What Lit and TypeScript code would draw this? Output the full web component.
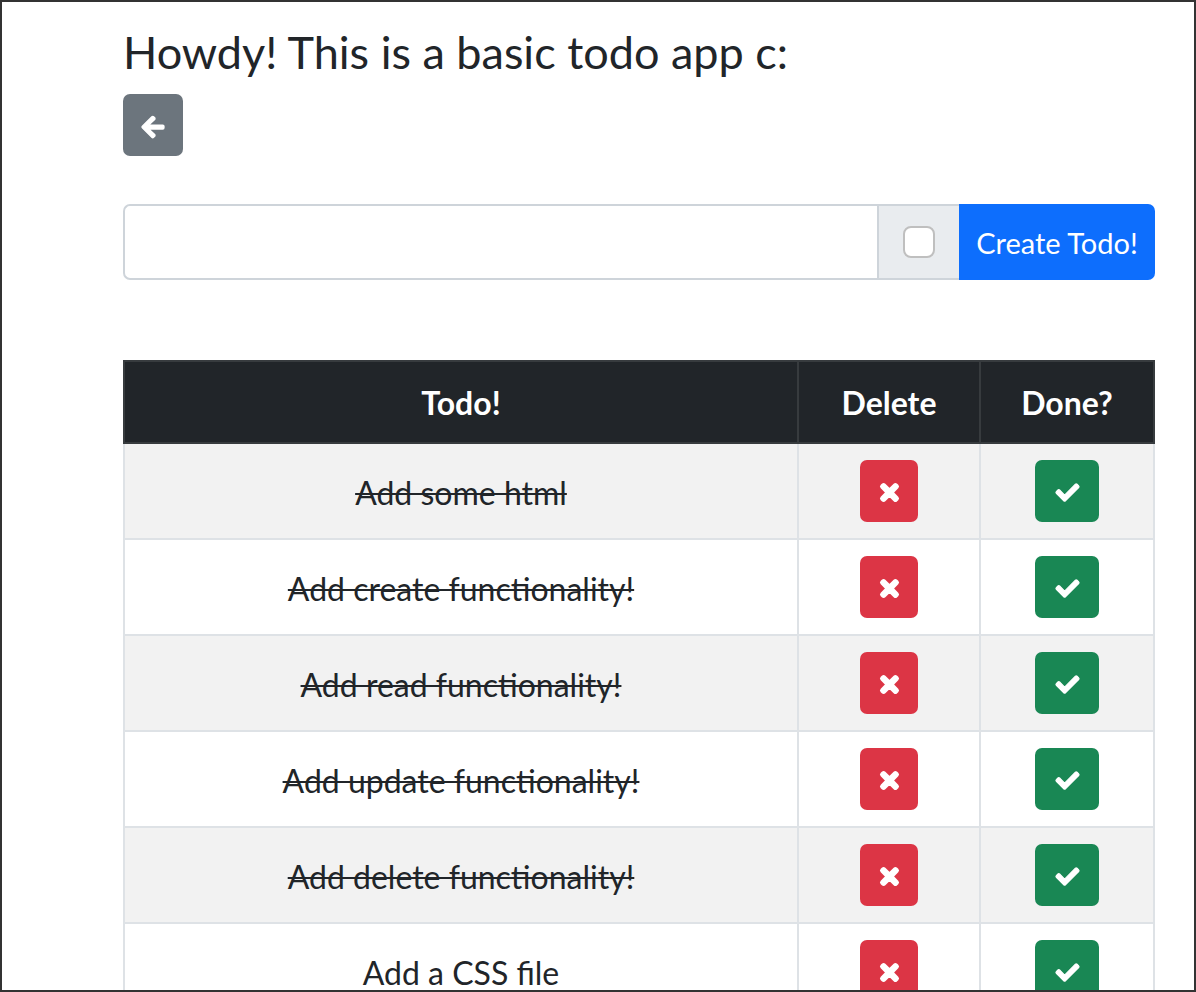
import { LitElement, html, css, svg } from "lit";
import { customElement } from "lit/decorators.js";

const ICONS = {
  times: svg`<path d="M242.72 256l100.07-100.07c12.28-12.28 12.28-32.19 0-44.48l-22.24-22.24c-12.28-12.28-32.19-12.28-44.48 0L176 189.28 75.93 89.21c-12.28-12.28-32.19-12.28-44.48 0L9.21 111.45c-12.28 12.28-12.28 32.19 0 44.48L109.28 256 9.21 356.07c-12.28 12.28-12.28 32.19 0 44.48l22.24 22.24c12.28 12.28 32.2 12.28 44.48 0L176 322.72l100.07 100.07c12.28 12.28 32.2 12.28 44.48 0l22.24-22.24c12.28-12.28 12.28-32.19 0-44.48L242.72 256z"/>`,
  check: svg`<path d="M173.898 439.404l-166.4-166.4c-9.997-9.997-9.997-26.206 0-36.204l36.203-36.204c9.997-9.998 26.207-9.998 36.204 0L192 312.69 432.095 72.596c9.997-9.997 26.207-9.997 36.204 0l36.203 36.204c9.997 9.997 9.997 26.206 0 36.204l-294.4 294.401c-9.998 9.997-26.207 9.997-36.204-.001z"/>`,
  arrow: svg`<path d="M257.5 445.1l-22.2 22.2c-9.4 9.4-24.6 9.4-33.9 0L7 273c-9.4-9.4-9.4-24.6 0-33.9L201.4 44.7c9.4-9.4 24.6-9.4 33.9 0l22.2 22.2c9.5 9.5 9.3 25-.4 34.3L136.6 216H424c13.3 0 24 10.7 24 24v32c0 13.3-10.7 24-24 24H136.6l120.5 114.8c9.8 9.3 10 24.8.4 34.3z"/>`,
};

const TODOS = [
  { text: "Add some html", done: true },
  { text: "Add create functionality!", done: true },
  { text: "Add read functionality!", done: true },
  { text: "Add update functionality!", done: true },
  { text: "Add delete functionality!", done: true },
  { text: "Add a CSS file", done: false },
];

@customElement("app-root")
export class AppRoot extends LitElement {
  static styles = css`
    :host {
      display: block;
      box-sizing: border-box;
      height: 992px;
      border: 2px solid #333;
      overflow: hidden;
      font-family: "Lato", sans-serif;
      color: #212529;
      background: #fff;
    }
    .wrap {
      width: 1032px;
      margin-left: 121px;
    }
    h1 {
      margin: 0;
      padding-top: 20px;
      font-size: 45px;
      font-weight: 400;
      line-height: 60px;
    }
    .btn {
      display: inline-flex;
      align-items: center;
      justify-content: center;
      box-sizing: border-box;
      height: 62px;
      border-radius: 7px;
      color: #fff;
      border: none;
      padding: 0;
    }
    .btn svg { fill: #fff; stroke: #fff; display: block; overflow: visible; }
    .back { width: 60px; background: #6c757d; margin-top: 12px; display: flex; }
    .back svg { width: 22px; height: 22px; stroke-width: 28px; margin-top: 4px; }
    .group {
      display: flex;
      height: 76px;
      margin-top: 48px;
    }
    .input {
      flex: 1;
      box-sizing: border-box;
      border: 2px solid #ced4da;
      border-right: none;
      border-radius: 7px 0 0 7px;
      background: #fff;
    }
    .addon {
      box-sizing: border-box;
      width: 82px;
      display: flex;
      align-items: center;
      justify-content: center;
      background: #e9ecef;
      border: 2px solid #ced4da;
      border-right: none;
    }
    .box {
      box-sizing: border-box;
      width: 32px;
      height: 32px;
      background: #fff;
      border: 2px solid #bfbfbf;
      border-radius: 8px;
    }
    .create {
      width: 196px;
      background: #0d6efd;
      color: #fff;
      border-radius: 0 7px 7px 0;
      display: flex;
      align-items: center;
      justify-content: center;
      font-size: 29px;
    }
    table {
      width: 1030px;
      margin-top: 80px;
      border-collapse: collapse;
      table-layout: fixed;
      font-size: 32px;
    }
    .c1 { width: 674px; }
    .c2 { width: 182px; }
    .c3 { width: 174px; }
    th, td {
      text-align: center;
      vertical-align: middle;
      padding: 0;
    }
    th {
      height: 80px;
      background: #212529;
      color: #fff;
      font-weight: 700;
      border: 2px solid #373b3e;
    }
    td {
      height: 94px;
      border: 2px solid #dee2e6;
    }
    td.text { height: 91px; padding-top: 3px; }
    tr.odd td { background: #f2f2f2; }
    .done { text-decoration: line-through; text-decoration-thickness: 2px; }
    .del { width: 58px; background: #dc3545; }
    .del svg { width: 17px; height: 25px; stroke-width: 40px; margin-top: 3px; }
    .chk { width: 64px; background: #198754; }
    .chk svg { width: 23px; height: 23px; stroke-width: 26px; margin-top: 3px; }
  `;

  private icon(name: keyof typeof ICONS, vb: string) {
    return html`<svg viewBox=${vb}>${ICONS[name]}</svg>`;
  }

  render() {
    return html`
      <div class="wrap">
        <h1>Howdy! This is a basic todo app c:</h1>
        <div class="btn back">${this.icon("arrow", "0 30 448 450")}</div>
        <div class="group">
          <div class="input"></div>
          <div class="addon"><div class="box"></div></div>
          <div class="create">Create Todo!</div>
        </div>
        <table>
          <colgroup><col class="c1" /><col class="c2" /><col class="c3" /></colgroup>
          <thead>
            <tr><th>Todo!</th><th>Delete</th><th>Done?</th></tr>
          </thead>
          <tbody>
            ${TODOS.map(
              (t, i) => html`
                <tr class=${i % 2 === 0 ? "odd" : ""}>
                  <td class="text"><span class=${t.done ? "done" : ""}>${t.text}</span></td>
                  <td><div class="btn del">${this.icon("times", "0 0 352 512")}</div></td>
                  <td><div class="btn chk">${this.icon("check", "0 0 512 512")}</div></td>
                </tr>
              `
            )}
          </tbody>
        </table>
      </div>
    `;
  }
}
